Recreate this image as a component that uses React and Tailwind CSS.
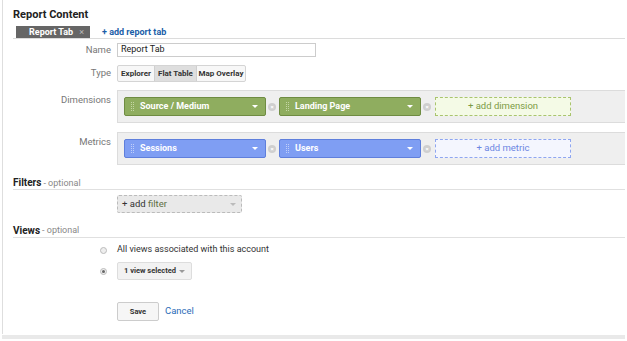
import React from "react";

const F = { fontFamily: "Roboto, 'Liberation Sans', Arial, sans-serif" };

function Grip({ color }) {
  return (
    <div className="grid grid-cols-2 gap-x-[1px] gap-y-[1px] ml-[6px]">
      {Array.from({ length: 10 }).map((_, i) => (
        <span key={i} className="block w-[1px] h-[1px]" style={{ background: color }} />
      ))}
    </div>
  );
}

function Caret({ cls }) {
  return (
    <span className={"block w-0 h-0 border-l-[3px] border-r-[3px] border-t-[3px] border-l-transparent border-r-transparent " + cls} />
  );
}

function Chip({ label, green }) {
  return (
    <div
      className={
        "flex items-center h-[19px] w-[142px] rounded-[2px] border " +
        (green ? "bg-[#8fad5f] border-[#6f8c42]" : "bg-[#7f9ef3] border-[#5f7fdc]")
      }
    >
      <Grip color={green ? "#c4d6a4" : "#c0cffa"} />
      <span className="ml-[6px] text-[9px] font-bold text-white flex-1">{label}</span>
      <Caret cls="border-t-white mr-[7px]" />
    </div>
  );
}

function Remove() {
  return (
    <div className="w-[8px] h-[8px] rounded-full bg-[#cfcfcf] flex items-center justify-center ml-[2px] mr-[3px]">
      <span className="text-white text-[6px] leading-none font-bold">×</span>
    </div>
  );
}

function Row({ label, children, className = "", labelCls = "" }) {
  return (
    <div className={"flex " + className}>
      <div className={"w-[104px] pr-[6px] text-right text-[9.5px] text-[#777] " + labelCls}>{label}</div>
      {children}
    </div>
  );
}

export default function App() {
  return (
    <div className="w-[627px] h-[341px] bg-white overflow-hidden" style={F}>
      <div className="ml-[2px] w-[623px] h-[334px] border-l border-[#dedede] pl-[10px] flex flex-col">
        <div className="mt-[8px] h-[14px] leading-[14px] text-[11px] font-bold text-[#222]">Report Content</div>
        <div className="mt-[4px] h-[13px] flex items-start border-b border-[#dcdcdc]">
          <div className="ml-[3px] w-[74px] h-[12px] bg-[#666] flex items-center pl-[13px]">
            <span className="text-[9px] font-bold text-white leading-none whitespace-nowrap">Report Tab</span>
            <span className="ml-[6px] text-[9px] text-[#bbb] leading-none">×</span>
          </div>
          <span className="ml-[12px] text-[9px] font-bold text-[#1a5ea8] leading-[12px]">+ add report tab</span>
        </div>

        <Row label="Name" className="mt-[4px] h-[14px] items-center">
          <div className="w-[199px] h-[14px] border border-[#ccc] flex items-center pl-[3px] text-[9px] text-[#222]">Report Tab</div>
        </Row>

        <Row label="Type" className="mt-[8px] h-[17px] items-center">
          <div className="flex h-[17px] border border-[#d4d4d4] rounded-[2px] text-[8px] font-bold text-[#333] bg-[#f7f7f7] whitespace-nowrap">
            <div className="w-[36px] flex items-center justify-center">Explorer</div>
            <div className="w-[43px] flex items-center justify-center bg-[#dedede] border-x border-[#cfcfcf]">Flat Table</div>
            <div className="w-[48px] flex items-center justify-center">Map Overlay</div>
          </div>
        </Row>

        <Row label="Dimensions" className="mt-[8px]" labelCls="pt-[3px]">
          <div className="flex-1 h-[33px] bg-[#efefef] border border-[#dcdcdc] border-r-0 flex items-center pl-[6px]">
            <Chip label="Source / Medium" green />
            <Remove />
            <Chip label="Landing Page" green />
            <Remove />
            <div className="ml-[1px] w-[136px] h-[19px] border border-dashed border-[#a9c46e] bg-[#f4fae6] flex items-center justify-center text-[9.5px] text-[#7c9a45]">
              + add dimension
            </div>
          </div>
        </Row>

        <Row label="Metrics" className="mt-[9px]" labelCls="pt-[3px]">
          <div className="flex-1 h-[33px] bg-[#efefef] border border-[#dcdcdc] border-r-0 flex items-center pl-[6px]">
            <Chip label="Sessions" />
            <Remove />
            <Chip label="Users" />
            <Remove />
            <div className="ml-[1px] w-[136px] h-[19px] border border-dashed border-[#8fa6f0] bg-[#f4f6fe] flex items-center justify-center text-[9.5px] text-[#6c86e2]">
              + add metric
            </div>
          </div>
        </Row>

        <div className="mt-[11px] h-[14px] border-b border-[#e0e0e0] flex items-center">
          <span className="text-[10px] font-bold text-[#222] leading-[14px]">Filters</span>
          <span className="text-[9px] text-[#888] leading-[14px] ml-[2px]">- optional</span>
        </div>

        <div className="mt-[5px] flex">
          <div className="w-[104px]" />
          <div className="w-[125px] h-[18px] border border-dashed border-[#bbb] bg-[#e9e9e9] rounded-[2px] flex items-center pl-[4px] pr-[5px]">
            <span className="text-[9.5px] text-[#333]">+ add <span className="text-[#5e6e42]">filter</span></span>
            <span className="flex-1" />
            <Caret cls="border-t-[#bbb]" />
          </div>
        </div>

        <div className="mt-[10px] h-[15px] border-b border-[#e0e0e0] flex items-center">
          <span className="text-[10px] font-bold text-[#222] leading-[15px]">Views</span>
          <span className="text-[9px] text-[#888] leading-[15px] ml-[2px]">- optional</span>
        </div>

        <div className="mt-[6px] h-[12px] flex items-center">
          <div className="w-[104px] flex justify-end pr-[10px]">
            <span className="block w-[7px] h-[7px] rounded-full border border-[#bbb] bg-[#eee]" />
          </div>
          <span className="text-[9px] text-[#333]">All views associated with this account</span>
        </div>

        <div className="mt-[6px] h-[18px] flex items-center">
          <div className="w-[104px] flex justify-end pr-[10px]">
            <span className="flex items-center justify-center w-[7px] h-[7px] rounded-full border border-[#bbb] bg-[#eee]">
              <span className="block w-[3px] h-[3px] rounded-full bg-[#666]" />
            </span>
          </div>
          <div className="w-[75px] h-[18px] border border-[#ddd] bg-[#f2f2f2] rounded-[2px] flex items-center pl-[6px] pr-[6px]">
            <span className="text-[7.5px] font-bold text-[#333]">1 view selected</span>
            <span className="flex-1" />
            <Caret cls="border-t-[#999]" />
          </div>
        </div>

        <div className="mt-[22px] h-[19px] flex items-center">
          <div className="w-[104px]" />
          <div className="w-[42px] h-[19px] border border-[#ccc] bg-[#f6f6f6] rounded-[2px] flex items-center justify-center text-[7.5px] font-bold text-[#333]">Save</div>
          <span className="ml-[6px] text-[9.5px] text-[#2b6cb8]">Cancel</span>
        </div>
      </div>
      <div className="ml-[2px] w-[623px] h-[4px] bg-[#e9e9e9] mt-[1px]" />
    </div>
  );
}
